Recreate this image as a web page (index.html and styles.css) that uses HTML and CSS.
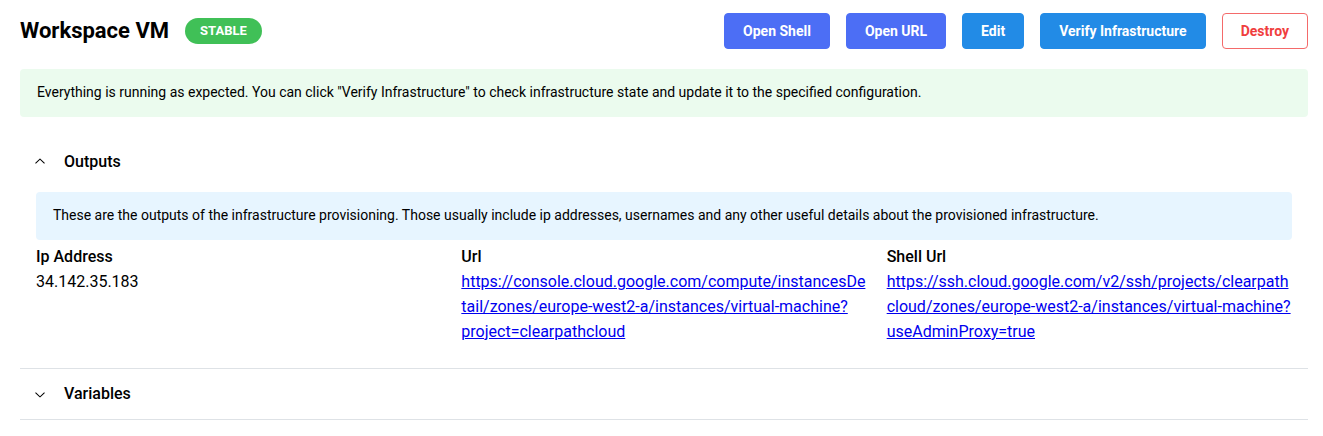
FILE: index.html
```html
<!DOCTYPE html>
<html lang="en">
<head>
<meta charset="utf-8">
<title>Workspace VM</title>
<link rel="stylesheet" href="styles.css">
</head>
<body>
<main class="page">
  <header class="header">
    <h1 class="title">Workspace VM</h1>
    <span class="badge">STABLE</span>
    <div class="actions">
      <button type="button" class="btn btn-indigo">Open Shell</button>
      <button type="button" class="btn btn-indigo">Open URL</button>
      <button type="button" class="btn btn-blue">Edit</button>
      <button type="button" class="btn btn-blue">Verify Infrastructure</button>
      <button type="button" class="btn btn-danger">Destroy</button>
    </div>
  </header>
  <p class="alert alert-success">Everything is running as expected. You can click "Verify Infrastructure" to check infrastructure state and update it to the specified configuration.</p>
  <div class="accordion">
    <section class="item">
      <h2 class="heading">
        <button type="button" class="control" aria-expanded="true" aria-controls="outputs">
          <svg class="chevron chevron-up" viewBox="0 0 15 15" aria-hidden="true"><path d="M3.135 6.158C3.324 5.957 3.64 5.946 3.842 6.135L7.5 9.565L11.158 6.135C11.36 5.946 11.676 5.957 11.865 6.158C12.054 6.36 12.043 6.676 11.842 6.865L7.842 10.615C7.65 10.795 7.35 10.795 7.158 10.615L3.158 6.865C2.957 6.676 2.946 6.36 3.135 6.158Z"/></svg>
          <span class="label">Outputs</span>
        </button>
      </h2>
      <div class="panel" id="outputs">
        <p class="alert alert-info">These are the outputs of the infrastructure provisioning. Those usually include ip addresses, usernames and any other useful details about the provisioned infrastructure.</p>
        <dl class="outputs">
          <div class="output"><dt>Ip Address</dt><dd>34.142.35.183</dd></div>
          <div class="output"><dt>Url</dt><dd><a href="https://console.cloud.google.com/compute/instancesDetail/zones/europe-west2-a/instances/virtual-machine?project=clearpathcloud">https://console.cloud.google.com/compute/instancesDetail/zones/europe-west2-a/instances/virtual-machine?project=clearpathcloud</a></dd></div>
          <div class="output"><dt>Shell Url</dt><dd><a href="https://ssh.cloud.google.com/v2/ssh/projects/clearpathcloud/zones/europe-west2-a/instances/virtual-machine?useAdminProxy=true">https://ssh.cloud.google.com/v2/ssh/projects/clearpathcloud/zones/europe-west2-a/instances/virtual-machine?useAdminProxy=true</a></dd></div>
        </dl>
      </div>
    </section>
    <section class="item">
      <h2 class="heading">
        <button type="button" class="control" aria-expanded="false">
          <svg class="chevron" viewBox="0 0 15 15" aria-hidden="true"><path d="M3.135 6.158C3.324 5.957 3.64 5.946 3.842 6.135L7.5 9.565L11.158 6.135C11.36 5.946 11.676 5.957 11.865 6.158C12.054 6.36 12.043 6.676 11.842 6.865L7.842 10.615C7.65 10.795 7.35 10.795 7.158 10.615L3.158 6.865C2.957 6.676 2.946 6.36 3.135 6.158Z"/></svg>
          <span class="label">Variables</span>
        </button>
      </h2>
    </section>
  </div>
</main>
</body>
</html>
```

FILE: styles.css
```css
* {
  box-sizing: border-box;
}

body {
  margin: 0;
  background: #fff;
  color: #000;
  font-family: Roboto, "Liberation Sans", sans-serif;
  font-size: 16px;
  line-height: 25px;
}

h1, h2, p, dl, dd {
  margin: 0;
}

.page {
  padding: 13px 15px 16px 20px;
}

.header {
  display: flex;
  align-items: center;
  gap: 16px;
  margin-bottom: 20px;
}

.title {
  font-size: 22px;
  font-weight: 700;
  line-height: 30px;
}

.badge {
  padding: 0 15px;
  border-radius: 13px;
  background: #40c057;
  color: #fff;
  font-size: 13px;
  font-weight: 700;
  line-height: 26px;
}

.actions {
  display: flex;
  gap: 16px;
  margin-left: auto;
}

.btn {
  height: 36px;
  padding: 0 18px;
  border: 1px solid transparent;
  border-radius: 4px;
  color: #fff;
  font: 700 14px/20px Roboto, "Liberation Sans", sans-serif;
  cursor: pointer;
}

.btn-indigo {
  background: #4c6ef5;
  border-color: #4c6ef5;
}

.btn-blue {
  background: #228be6;
  border-color: #228be6;
}

.btn-danger {
  background: #fff;
  border-color: #f46a6a;
  color: #f03e3e;
}

.alert {
  padding: 12px 17px 14px;
  border-radius: 4px;
  font-size: 14px;
  line-height: 22px;
}

.alert-success {
  background: #ebfbee;
}

.alert-info {
  background: #e7f5ff;
}

.accordion {
  margin-top: 20px;
}

.item {
  border-bottom: 1px solid #dee2e6;
}

.heading {
  font-size: 16px;
}

.control {
  display: flex;
  align-items: center;
  gap: 16px;
  width: 100%;
  height: 50px;
  padding: 0 12px;
  border: 0;
  background: transparent;
  color: #000;
  font: 500 16px/25px Roboto, "Liberation Sans", sans-serif;
  cursor: pointer;
}

.label {
  padding-bottom: 2px;
}

.chevron {
  width: 16px;
  height: 16px;
  fill: currentColor;
}

.chevron-up {
  transform: rotate(180deg);
}

.panel {
  padding: 5px 16px 24px;
}

.outputs {
  display: grid;
  grid-template-columns: repeat(3, minmax(0, 1fr));
  gap: 20px;
  margin-top: 4px;
}

.output dt {
  font-weight: 500;
}

.output dd {
  overflow-wrap: anywhere;
}

.output a {
  color: #0000ee;
}
```
